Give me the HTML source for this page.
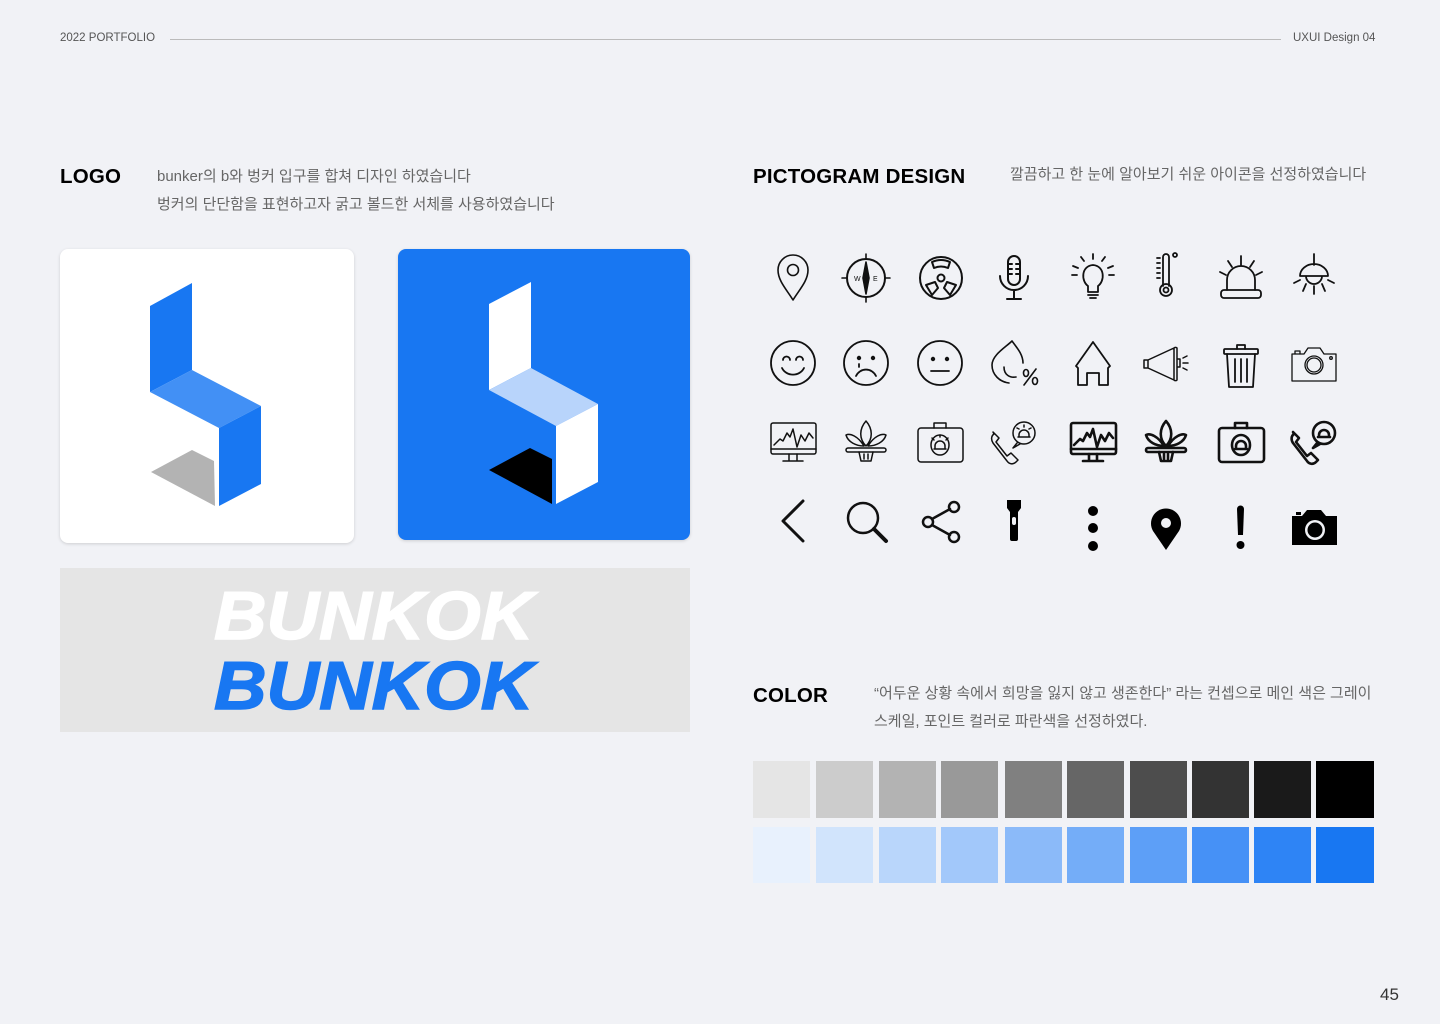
<!DOCTYPE html>
<html><head><meta charset="utf-8"><style>
*{margin:0;padding:0;box-sizing:border-box}
body{width:1440px;height:1024px;background:#f1f2f6;position:relative;overflow:hidden;font-family:"Liberation Sans","Noto Sans CJK KR",sans-serif}
.a{position:absolute;white-space:nowrap}
.h{font-size:11.5px;color:#555}
.t{font-size:20.5px;font-weight:bold;color:#000;letter-spacing:0.2px}
.d{font-size:15px;color:#666;line-height:28px}
.sw{position:absolute;width:57px;height:57px}
</style></head><body>
<div class="a h" style="left:60px;top:32px">2022 PORTFOLIO</div>
<div class="a" style="left:170px;top:39px;width:1111px;height:1px;background:#bbb"></div>
<div class="a h" style="left:1293px;top:32px">UXUI Design 04</div>

<div class="a t" style="left:60px;top:165px">LOGO</div>
<div class="a d" style="left:157px;top:163px">bunker의 b와 벙커 입구를 합쳐 디자인 하였습니다<br>벙커의 단단함을 표현하고자 굵고 볼드한 서체를 사용하였습니다</div>

<div class="a t" style="left:753px;top:165px">PICTOGRAM DESIGN</div>
<div class="a d" style="left:1010px;top:161px">깔끔하고 한 눈에 알아보기 쉬운 아이콘을 선정하였습니다</div>

<div class="a t" style="left:753px;top:684px">COLOR</div>
<div class="a d" style="left:874px;top:680px">“어두운 상황 속에서 희망을 잃지 않고 생존한다” 라는 컨셉으로 메인 색은 그레이<br>스케일, 포인트 컬러로 파란색을 선정하였다.</div>

<div class="a" style="left:60px;top:249px;width:294px;height:294px;background:#fff;border-radius:8px;box-shadow:0 1px 3px rgba(0,0,0,.15)"></div>
<div class="a" style="left:398px;top:249px;width:292px;height:291px;background:#1877f2;border-radius:8px;box-shadow:0 1px 3px rgba(0,0,0,.15)"></div>

<div class="a" style="left:60px;top:568px;width:630px;height:164px;background:#e5e5e5"></div>
<div class="a" style="left:214px;top:578px;font-size:68px;font-weight:bold;font-style:italic;color:#fff;transform:scaleX(1.07);transform-origin:left;line-height:76px;-webkit-text-stroke:1.5px #fff">BUNKOK</div>
<div class="a" style="left:214px;top:648px;font-size:68px;font-weight:bold;font-style:italic;color:#1877f2;transform:scaleX(1.07);transform-origin:left;line-height:76px;-webkit-text-stroke:1.5px #1877f2">BUNKOK</div>

<svg class="a" style="left:0;top:0" width="1440" height="1024" viewBox="0 0 1440 1024">
<polygon points="150,306 192,283 192,370 150,392" fill="#1877f2"/>
<polygon points="150,392 192,370 261,406 219,428" fill="#4290f5"/>
<polygon points="219,428 261,406 261,484 219,506" fill="#1877f2"/>
<polygon points="151,472 192,450 214,461 215,506" fill="#b3b3b3"/>
<polygon points="489,304 531,282 531,368 489,390" fill="#fff"/>
<polygon points="489,390 531,368 598,404 556,426" fill="#b8d4fb"/>
<polygon points="556,426 598,404 598,482 556,504" fill="#fff"/>
<polygon points="489,470 530,448 552,459 552,504" fill="#000"/>

<g fill="none" stroke="#111" stroke-width="1.6" stroke-linecap="round" stroke-linejoin="round">
<path d="M793,300 C787,290 778,281 778,270 A15,15 0 0 1 808,270 C808,281 799,290 793,300Z"/><circle cx="793" cy="270" r="5.5"/>
<g transform="translate(866,278)"><circle r="19" stroke-width="2"/><path d="M0,-16 L3,0 L0,16 L-3,0Z" fill="#111"/><path d="M0,-19V-24M0,19V24M-19,0H-24M19,0H24"/><text x="-12" y="3" font-size="7" stroke="none" fill="#111" font-family="Liberation Sans">W</text><text x="7" y="3" font-size="7" stroke="none" fill="#111" font-family="Liberation Sans">E</text></g>
<g transform="translate(941,278)" stroke-width="2"><circle r="21"/><circle r="3.5"/><path d="M-7,-10 L-9,-16 Q0,-20 9,-16 L7,-10 Q0,-13 -7,-10Z M-6,4 L-15,7 L-9,17 L-3,10Z M6,4 L15,7 L9,17 L3,10Z"/></g>
<g transform="translate(1014,278)" stroke-width="2"><rect x="-6" y="-22" width="12" height="29" rx="6"/><path d="M-6,-14h4M-6,-9h4M-6,-4h4M2,-14h4M2,-9h4M2,-4h4"/><path d="M-14,-2 A14,14 0 0 0 14,-2 M0,12V21M-7,21H7"/></g>
<g transform="translate(1093,278)" stroke-width="1.8"><path d="M-5,14 V8 C-12,3 -12,-12 0,-13 C12,-12 12,3 5,8 V14Z M-5,17H5M-3,20H3"/><path d="M0,-19V-24M-9,-17l-3,-4M9,-17l3,-4M-15,-10l-5,-2M15,-10l5,-2M-16,-3h-5M16,-3h5"/></g>
<g transform="translate(1166,276)" stroke-width="1.8"><path d="M-3,10 V-19 A3,3 0 0 1 3,-19 V10"/><circle cy="14" r="6"/><circle cy="14" r="2.5"/><circle cx="9" cy="-21" r="2"/><path d="M-9,-18h3M-9,-13h3M-9,-8h3M-9,-3h3M-9,2h3"/></g>
<g transform="translate(1241,278)" stroke-width="1.8"><rect x="-20" y="12" width="40" height="8" rx="3"/><path d="M-14,12 V2 A14,14 0 0 1 14,2 V12"/><path d="M0,-13V-22M-9,-11l-4,-6M9,-11l4,-6M-15,-3l-6,-3M15,-3l6,-3"/></g>
<g transform="translate(1314,276)" stroke-width="1.8"><path d="M0,-22V-11M-14,0 A14,12 0 0 1 14,0Z M-8,0 A8,8 0 0 0 8,0"/><path d="M-8,8l-3,7M8,8l3,7M0,10v8M-14,4l-6,3M14,4l6,3"/></g>
<g transform="translate(793,363)" stroke-width="1.8"><circle r="22"/><path d="M-10,-3 a3.5,3.5 0 0 1 7,0M3,-3 a3.5,3.5 0 0 1 7,0M-11,5 A12,11 0 0 0 11,5"/></g>
<g transform="translate(866,363)" stroke-width="1.8"><circle r="22"/><circle cx="-7" cy="-5" r="1.3" fill="#111"/><circle cx="7" cy="-5" r="1.3" fill="#111"/><path d="M-10,13 A11,11 0 0 1 10,13M-7,1v3"/></g>
<g transform="translate(940,363)" stroke-width="1.8"><circle r="22"/><circle cx="-7" cy="-4" r="1.3" fill="#111"/><circle cx="7" cy="-4" r="1.3" fill="#111"/><path d="M-9,8H9"/></g>
<g transform="translate(1012,363)" stroke-width="1.6"><path d="M0,-22 C6,-14 11,-8 11,0 M-3,20 C-12,19 -20,12 -20,2 C-20,-8 -6,-16 0,-22"/><path d="M-8,4 C-8,12 -2,15 4,14"/><ellipse cx="14" cy="10" rx="2.5" ry="3.5"/><ellipse cx="23" cy="18" rx="2.5" ry="3.5"/><path d="M24,6 L12,22"/></g>
<g transform="translate(1093,363)" stroke-width="1.8"><path d="M-17,3 L0,-21 L17,3 L15,5 V22 H6 V10 H-6 V22 H-15 V5Z"/></g>
<g transform="translate(1166,363)" stroke-width="1.5"><path d="M-22,-3h4v8h-4z M-18,-3 L8,-15 V17 L-18,5Z M8,-15 a2,2 0 0 1 3,0 V17 a2,2 0 0 1 -3,0 M11,-4 h3 v8 h-3 M17,-5l4,-2M17,0h5M17,5l4,2"/></g>
<g transform="translate(1241,365)" stroke-width="1.8"><rect x="-17" y="-16" width="34" height="5" rx="1"/><path d="M-4,-16 v-4 h8 v4 M-14,-11 L-12,22 H12 L14,-11 M-6,-6V17M0,-6V17M6,-6V17"/></g>
<g transform="translate(1314,365)" stroke-width="1.3"><path d="M-22,-11 H-10 L-6,-17 H6 L10,-11 H22 V16 H-22Z"/><path d="M-19,-11v-3h5v3"/><circle r="9"/><circle r="7"/><circle cx="17" cy="-7" r="1.3"/></g>
<g transform="translate(793,441)" stroke-width="1.5"><rect x="-22" y="-18" width="45" height="31" rx="2"/><path d="M-22,8H23M-4,13v7M4,13v7M-10,20H10"/><path d="M-19,4 L-13,-2 L-10,0 L-6,-8 L-3,-4 L0,-12 L4,6 L8,-6 L12,0 L16,-8 L20,-3"/></g>
<g transform="translate(866,441)" stroke-width="1.5"><path d="M0,-20 C-7,-12 -7,-2 0,5 C7,-2 7,-12 0,-20Z M-2,5 C-8,-5 -16,-8 -20,-6 C-18,1 -10,5 -2,5Z M2,5 C8,-5 16,-8 20,-6 C18,1 10,5 2,5Z"/><rect x="-20" y="7" width="40" height="4" rx="2"/><path d="M-7,11 L-5,20 H5 L7,11 M-2,13v5M2,13v5"/></g>
<g transform="translate(940,441)" stroke-width="1.5"><rect x="-22" y="-13" width="45" height="34" rx="3"/><path d="M-6,-13v-5h12v5"/><ellipse cy="4" rx="9" ry="10"/><path d="M-5,8 v-3 a5,5 0 0 1 10,0 v3 h-6 M-6,8h12M0,-4v-2M-6,-1l-2,-2M6,-1l2,-2"/></g>
<g transform="translate(1014,441)" stroke-width="1.5"><path d="M-20,-7 c-3,2 -3,6 -1,9 l14,18 c2,3 6,4 9,1 l2,-2 -7,-7 -4,3 -11,-14 3,-4 -6,-6Z"/><circle cx="10" cy="-8" r="11"/><path d="M3,2 l-4,5 7,-4"/><path d="M5,-4 v-2 a5,5 0 0 1 10,0 v2 h-10M4,-4h12M10,-14v-2M5,-12l-2,-1M15,-12l2,-1"/></g>
<g transform="translate(1093,441)" stroke-width="2.6"><rect x="-22" y="-18" width="45" height="31" rx="2"/><path d="M-22,8H23M-4,13v7M4,13v7M-10,20H10"/><path d="M-19,4 L-13,-2 L-10,0 L-6,-8 L-3,-4 L0,-12 L4,6 L8,-6 L12,0 L16,-8 L20,-3"/></g>
<g transform="translate(1166,441)" stroke-width="2.6"><path d="M0,-20 C-7,-12 -7,-2 0,5 C7,-2 7,-12 0,-20Z M-2,5 C-8,-5 -16,-8 -20,-6 C-18,1 -10,5 -2,5Z M2,5 C8,-5 16,-8 20,-6 C18,1 10,5 2,5Z"/><rect x="-20" y="7" width="40" height="4" rx="2"/><path d="M-7,11 L-5,20 H5 L7,11 M-2,13v5M2,13v5"/></g>
<g transform="translate(1241,441)" stroke-width="2.6"><rect x="-22" y="-13" width="45" height="34" rx="3"/><path d="M-6,-13v-5h12v5"/><ellipse cy="4" rx="9" ry="10"/><path d="M-5,8 v-3 a5,5 0 0 1 10,0 v3 h-6 M-6,8h12"/></g>
<g transform="translate(1314,441)" stroke-width="2.6"><path d="M-20,-7 c-3,2 -3,6 -1,9 l14,18 c2,3 6,4 9,1 l2,-2 -7,-7 -4,3 -11,-14 3,-4 -6,-6Z"/><circle cx="10" cy="-8" r="11"/><path d="M3,2 l-4,5 7,-4"/><path d="M5,-4 v-2 a5,5 0 0 1 10,0 v2 h-10M4,-4h12"/></g>
<path d="M803,501 L783,521 L803,541" stroke-width="3"/>
<g stroke-width="2.5"><circle cx="863" cy="518" r="15"/><path d="M874,529 L886,541" stroke-width="4"/></g>
<g stroke-width="2.5"><circle cx="954" cy="507" r="5"/><circle cx="928" cy="522" r="5"/><circle cx="954" cy="537" r="5"/><path d="M932,519 L950,509 M932,525 L950,535"/></g>
</g>
<g fill="#000">
<path d="M1007,500 h14 v8 l-3,4 v27 a2,2 0 0 1 -2,2 h-4 a2,2 0 0 1 -2,-2 v-27 l-3,-4z"/>
<rect x="1012" y="517" width="4" height="8" rx="2" fill="#f1f2f6"/>
<circle cx="1093" cy="511" r="5"/><circle cx="1093" cy="528" r="5"/><circle cx="1093" cy="546" r="5"/>
<path d="M1166,550 L1153,531 A15,15 0 1 1 1179,531Z"/><circle cx="1166" cy="523" r="5" fill="#f1f2f6"/>
<path d="M1237,509 a3.5,3.5 0 0 1 7,0 l-1,26 h-5z"/><circle cx="1240.5" cy="545" r="4"/>
<path d="M1292,516 h10 l5,-6 h14 l5,6 h11 v29 h-45z"/><rect x="1296" y="512" width="5" height="3"/><circle cx="1315" cy="530" r="10" fill="#f1f2f6"/><circle cx="1315" cy="530" r="7.5"/>
</g>
</svg>

<div class="sw" style="left:753px;top:761px;background:#e5e5e5"></div>
<div class="sw" style="left:816px;top:761px;background:#cccccc"></div>
<div class="sw" style="left:879px;top:761px;background:#b3b3b3"></div>
<div class="sw" style="left:941px;top:761px;background:#999999"></div>
<div class="sw" style="left:1005px;top:761px;background:#808080"></div>
<div class="sw" style="left:1067px;top:761px;background:#666666"></div>
<div class="sw" style="left:1130px;top:761px;background:#4d4d4d"></div>
<div class="sw" style="left:1192px;top:761px;background:#333333"></div>
<div class="sw" style="left:1254px;top:761px;background:#1a1a1a"></div>
<div class="sw" style="left:1316px;top:761px;width:58px;background:#000"></div>
<div class="sw" style="left:753px;top:827px;height:56px;background:#e8f1fd"></div>
<div class="sw" style="left:816px;top:827px;height:56px;background:#d1e4fc"></div>
<div class="sw" style="left:879px;top:827px;height:56px;background:#b9d6fb"></div>
<div class="sw" style="left:941px;top:827px;height:56px;background:#a2c8fa"></div>
<div class="sw" style="left:1005px;top:827px;height:56px;background:#8bbaf9"></div>
<div class="sw" style="left:1067px;top:827px;height:56px;background:#74adf8"></div>
<div class="sw" style="left:1130px;top:827px;height:56px;background:#5d9ff7"></div>
<div class="sw" style="left:1192px;top:827px;height:56px;background:#4691f6"></div>
<div class="sw" style="left:1254px;top:827px;height:56px;background:#2e84f5"></div>
<div class="sw" style="left:1316px;top:827px;width:58px;height:56px;background:#1877f2"></div>

<div class="a" style="left:1380px;top:985px;font-size:17px;color:#333">45</div>
</body></html>
